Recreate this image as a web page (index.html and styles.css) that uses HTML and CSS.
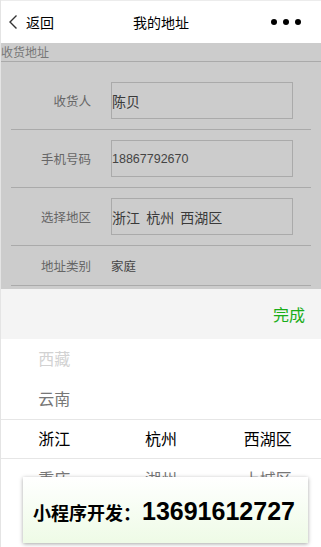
FILE: index.html
```html
<!DOCTYPE html>
<html lang="zh">
<head>
<meta charset="utf-8">
<title>我的地址</title>
<link rel="stylesheet" href="styles.css">
</head>
<body>
<div class="app">
  <header class="nav">
    <div class="nav-left">
      <svg class="chev" width="10" height="16" viewBox="0 0 10 16"><path d="M8.5 1.5 L2 8 L8.5 14.5" fill="none" stroke="#333" stroke-width="1.4"/></svg>
      <span class="back">返回</span>
    </div>
    <div class="nav-title">我的地址</div>
    <div class="nav-right">
      <span class="dot"></span><span class="dot"></span><span class="dot"></span>
    </div>
  </header>

  <section class="masked">
    <div class="sec-title">收货地址</div>
    <div class="form">
      <div class="row">
        <div class="label">收货人</div>
        <div class="input"><span class="val">陈贝</span></div>
      </div>
      <div class="row">
        <div class="label">手机号码</div>
        <div class="input"><span class="val num">18867792670</span></div>
      </div>
      <div class="row">
        <div class="label">选择地区</div>
        <div class="input"><span class="val region">浙江 杭州 西湖区</span></div>
      </div>
      <div class="row row-plain">
        <div class="label">地址类别</div>
        <div class="plain">家庭</div>
      </div>
    </div>
  </section>

  <section class="picker">
    <div class="toolbar"><span class="done">完成</span></div>
    <div class="wheel">
      <div class="col">
        <div class="item far">西藏</div>
        <div class="item near">云南</div>
        <div class="item sel">浙江</div>
        <div class="item near">重庆</div>
      </div>
      <div class="col col-off">
        <div class="item sel">杭州</div>
        <div class="item near">湖州</div>
      </div>
      <div class="col col-off">
        <div class="item sel">西湖区</div>
        <div class="item near">上城区</div>
      </div>
      <div class="indicator"></div>
    </div>
  </section>

  <div class="toast">
    <span class="toast-cn">小程序开发：</span><span class="toast-num">13691612727</span>
  </div>
</div>
</body>
</html>
```

FILE: styles.css
```css
html, body {
  margin: 0;
  padding: 0;
}
body {
  width: 321px;
  height: 547px;
  overflow: hidden;
  background: #fff;
  font-family: "Noto Sans CJK SC", "Liberation Sans", sans-serif;
}
.app {
  position: relative;
  height: 547px;
  box-sizing: border-box;
  border-left: 1px solid #e4e4e4;
  display: flex;
  flex-direction: column;
}
.nav {
  height: 43px;
  box-sizing: border-box;
  border-top: 1px solid #ececec;
  background: #fff;
  display: grid;
  grid-template-columns: 1fr auto 1fr;
  align-items: center;
  flex: none;
}
.nav-left {
  display: flex;
  align-items: center;
  padding-left: 7px;
}
.chev {
  display: block;
  margin-right: 8px;
}
.back, .nav-title {
  font-size: 14px;
  color: #000;
  line-height: 20px;
}
.nav-right {
  display: flex;
  justify-content: flex-end;
  gap: 6px;
  padding-right: 20px;
}
.dot {
  width: 6px;
  height: 6px;
  border-radius: 50%;
  background: #000;
}
.masked {
  background: #cccccc;
  height: 246px;
  flex: none;
  box-sizing: border-box;
}
.sec-title {
  height: 18px;
  line-height: 18px;
  font-size: 12px;
  color: #777;
  border-bottom: 1px solid #aaaaaa;
}
.form {
  padding-top: 10px;
}
.row {
  margin: 0 10px;
  padding: 10px 0;
  border-bottom: 1px solid #aaaaaa;
  display: flex;
  align-items: center;
}
.row-plain {
  padding: 0;
  height: 39px;
}
.label {
  width: 80px;
  text-align: right;
  font-size: 12.5px;
  color: #666;
  margin-right: 20px;
  flex: none;
}
.input {
  width: 182px;
  height: 37px;
  box-sizing: border-box;
  border: 1px solid #aaaaaa;
  display: flex;
  align-items: center;
}
.val {
  font-size: 14px;
  color: #3a3a3a;
}
.val.num {
  font-family: "Liberation Sans", sans-serif;
  font-size: 12.5px;
  color: #444;
}
.val.region {
  word-spacing: 3px;
}
.plain {
  font-size: 12.5px;
  color: #444;
}
.picker {
  flex: 1;
  display: flex;
  flex-direction: column;
  background: #fff;
}
.toolbar {
  height: 50px;
  background: #f4f4f4;
  display: flex;
  align-items: center;
  justify-content: flex-end;
  padding-right: 16px;
  flex: none;
}
.done {
  font-size: 16px;
  color: #1aad19;
}
.wheel {
  position: relative;
  flex: 1;
  display: grid;
  grid-template-columns: 1fr 1fr 1fr;
  overflow: hidden;
}
.col {
  display: flex;
  flex-direction: column;
}
.col-off {
  padding-top: 80px;
}
.item {
  height: 40px;
  line-height: 38px;
  text-align: center;
  font-size: 16px;
  color: #000;
}
.item.far { color: #d2d2d2; }
.item.near { color: #777; }
.item.sel { color: #000; }
.indicator {
  position: absolute;
  left: 0;
  right: 0;
  top: 80px;
  height: 40px;
  box-sizing: border-box;
  border-top: 1px solid #e6e6e6;
  border-bottom: 1px solid #e6e6e6;
  pointer-events: none;
}
.toast {
  position: absolute;
  left: 22px;
  top: 477px;
  width: 285px;
  height: 66px;
  box-sizing: border-box;
  background: linear-gradient(#ffffff, #eefbe6);
  box-shadow: 0 1px 4px rgba(0, 0, 0, 0.35);
  display: flex;
  align-items: baseline;
  padding: 21px 0 0 10px;
  color: #000;
}
.toast-cn {
  font-size: 18px;
  font-weight: bold;
  line-height: 26px;
}
.toast-num {
  font-family: "Liberation Sans", sans-serif;
  font-size: 25px;
  font-weight: bold;
  line-height: 26px;
  margin-left: 1px;
}
```
